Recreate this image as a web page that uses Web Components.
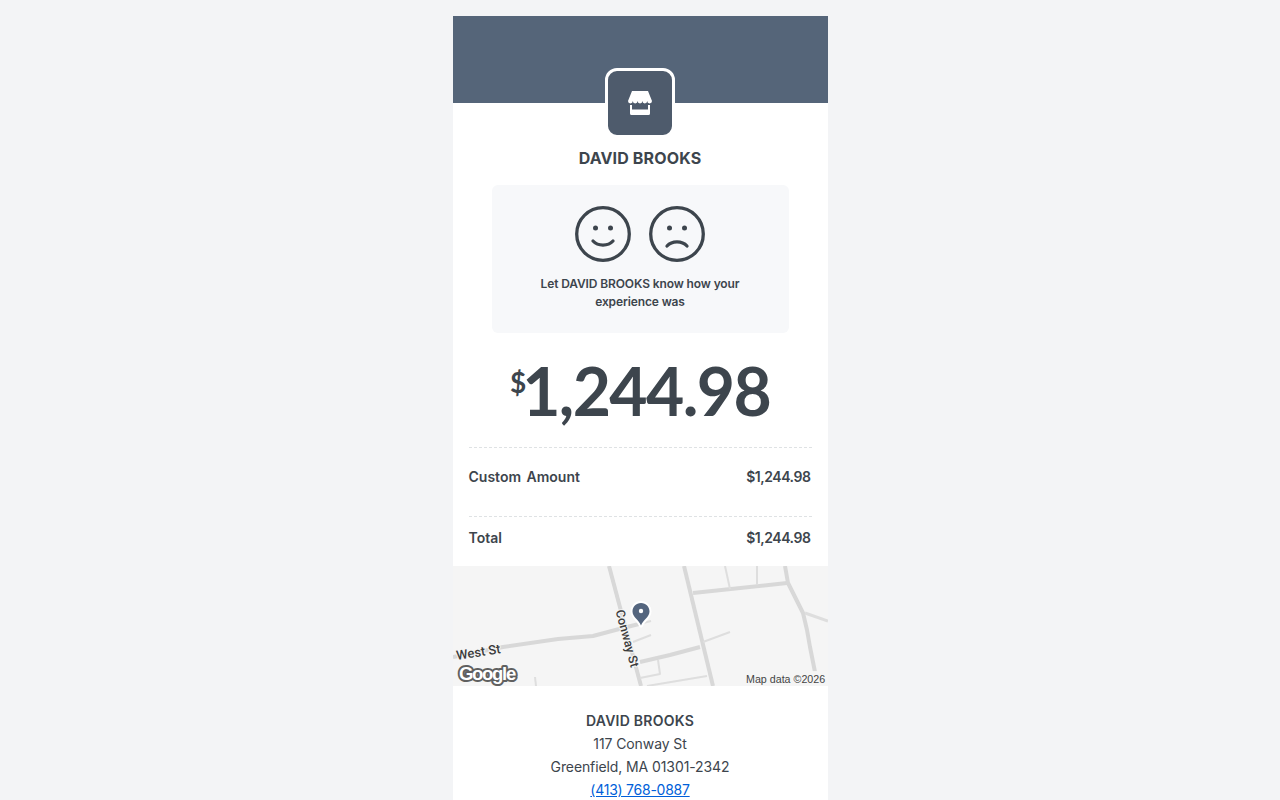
<!DOCTYPE html>
<html>
<head>
<meta charset="utf-8">
<title>Receipt</title>
<style>
  html { overflow: hidden; }
  body { margin: 0; background: #f3f4f6; font-family: Inter, "Liberation Sans", sans-serif; color: #3d454d; }
</style>
</head>
<body>
<receipt-card>
  <merchant-header name="DAVID BROOKS"></merchant-header>
  <feedback-box name="DAVID BROOKS"></feedback-box>
  <amount-total value="1,244.98"></amount-total>
  <line-item label="Custom Amount" value="$1,244.98" height="68" pad="20"></line-item>
  <line-item label="Total" value="$1,244.98" height="49" pad="12"></line-item>
  <map-panel></map-panel>
  <merchant-footer>
    <b>DAVID BROOKS</b>
    <span>117 Conway St</span>
    <span>Greenfield, MA 01301-2342</span>
    <a href="tel:4137680887">(413) 768-0887</a>
  </merchant-footer>
</receipt-card>

<script>
class ReceiptCard extends HTMLElement {
  constructor() {
    super()
    this.attachShadow({ mode: 'open' });
    this.shadowRoot.innerHTML = `
      <style>
      :host { display: block; padding-top: 16px; }
      div { width: 375px; margin: 0 auto; background: #fff; }
      </style>
      <div><slot></slot></div>`
  }
}
customElements.define('receipt-card', ReceiptCard);

class MerchantHeader extends HTMLElement {
  constructor() {
    super()
    this.attachShadow({ mode: 'open' });
    this.shadowRoot.innerHTML = `
      <style>
      :host { display: block; }
      .banner { height: 87px; background: #556579; display: flex; justify-content: center; }
      .logo {
          box-sizing: border-box; width: 70px; height: 70px; margin-top: 52px; border: 3px solid #fff;
          border-radius: 12px; background: #4e5b6c; display: flex; align-items: center; justify-content: center;
          position: relative;
      }
      h1 { margin: 45px 0 0; text-align: center; font-size: 16px; line-height: 20px; font-weight: 700; letter-spacing: 0.15px; color: #3d454d; }
      </style>
      <div class="banner">
        <div class="logo">
          <svg width="24" height="24" viewBox="0 0 24 24">
            <path fill="#fff" d="M4 0H20L24 10a2.400 2.400 0 0 1-4.800 0a2.400 2.400 0 0 1-4.800 0a2.400 2.400 0 0 1-4.800 0a2.400 2.400 0 0 1-4.800 0a2.400 2.400 0 0 1-4.800 0z"/>
            <path fill="#fff" d="M2 14V22.500A1.500 1.500 0 0 0 3.500 24H20.500A1.500 1.500 0 0 0 22 22.500V14H20V18.500H4V14z"/>
          </svg>
        </div>
      </div>
      <h1></h1>`
    this.shadowRoot.querySelector('h1').textContent = this.getAttribute('name');
  }
}
customElements.define('merchant-header', MerchantHeader);

class FeedbackBox extends HTMLElement {
  constructor() {
    super()
    this.attachShadow({ mode: 'open' });
    this.shadowRoot.innerHTML = `
      <style>
      :host { display: block; box-sizing: border-box; width: 297px; height: 148px; margin: 17px auto 0; padding-top: 21px; background: #f7f8fa; border-radius: 6px; }
      .faces { display: flex; justify-content: center; gap: 18px; }
      svg { display: block; }
      p { margin: 13px auto 0; width: 220px; text-align: center; font-size: 12px; line-height: 18px; font-weight: 600; letter-spacing: -0.12px; color: #3d454d; }
      </style>
      <div class="faces">
        <svg width="56" height="56" viewBox="0 0 56 56" fill="none" stroke="#3d454d" stroke-width="3.300">
          <circle cx="28" cy="28" r="26.300"/>
          <circle cx="20.500" cy="22" r="2.500" fill="#3d454d" stroke="none"/>
          <circle cx="35.500" cy="22" r="2.500" fill="#3d454d" stroke="none"/>
          <path d="M18 35c5 5.500 15 5.500 20 0" stroke-linecap="round"/>
        </svg>
        <svg width="56" height="56" viewBox="0 0 56 56" fill="none" stroke="#3d454d" stroke-width="3.300">
          <circle cx="28" cy="28" r="26.300"/>
          <circle cx="20.500" cy="22" r="2.500" fill="#3d454d" stroke="none"/>
          <circle cx="35.500" cy="22" r="2.500" fill="#3d454d" stroke="none"/>
          <path d="M18 40c5-5.500 15-5.500 20 0" stroke-linecap="round"/>
        </svg>
      </div>
      <p></p>`
    this.shadowRoot.querySelector('p').textContent = 'Let ' + this.getAttribute('name') + ' know how your experience was';
  }
}
customElements.define('feedback-box', FeedbackBox);

class AmountTotal extends HTMLElement {
  constructor() {
    super()
    this.attachShadow({ mode: 'open' });
    this.shadowRoot.innerHTML = `
      <style>
      :host { display: flex; justify-content: center; align-items: flex-start; height: 114px; color: #3d454d; font-family: Lato, "Liberation Sans", sans-serif; font-weight: 700; }
      .cur { font-size: 28px; line-height: 32px; margin-top: 33px; letter-spacing: -4px; }
      .val { font-size: 66px; line-height: 80px; margin-top: 18px; letter-spacing: -1.6px; }
      </style>
      <span class="cur">$</span><span class="val"></span>`
    this.shadowRoot.querySelector('.val').textContent = this.getAttribute('value');
  }
}
customElements.define('amount-total', AmountTotal);

class LineItem extends HTMLElement {
  constructor() {
    super()
    this.attachShadow({ mode: 'open' });
    this.shadowRoot.innerHTML = `
      <style>
      :host { display: block; margin: 0 16px; border-top: 1px dashed #dfe2e4; }
      div { display: flex; justify-content: space-between; padding-right: 1px; font-size: 14px; line-height: 18px; font-weight: 600; color: #3d454d; box-sizing: border-box; }
      .l { word-spacing: 2px; }
      .v { letter-spacing: -0.45px; }
      </style>
      <div><span class="l"></span><span class="v"></span></div>`
    const row = this.shadowRoot.querySelector('div');
    row.style.height = this.getAttribute('height') + 'px';
    row.style.paddingTop = this.getAttribute('pad') + 'px';
    this.shadowRoot.querySelector('.l').textContent = this.getAttribute('label');
    this.shadowRoot.querySelector('.v').textContent = this.getAttribute('value');
  }
}
customElements.define('line-item', LineItem);

class MapPanel extends HTMLElement {
  constructor() {
    super()
    this.attachShadow({ mode: 'open' });
    this.shadowRoot.innerHTML = `
      <style>
      :host { display: block; height: 120px; background: #f5f5f5; }
      svg { display: block; }
      text { font-family: Roboto, "Liberation Sans", sans-serif; }
      </style>
      <svg width="375" height="120" viewBox="0 0 375 120" fill="none" stroke-linejoin="round">
        <g stroke="#d8d8d8" stroke-width="4">
          <path d="M156 0L188 120"/>
          <path d="M231 0L260 120"/>
          <path d="M0 91L50 81L105 73L140 70L170 62L186 58"/>
          <path d="M240 27L334 17"/>
          <path d="M332 0L335 17L350 47L354 64L357 81L362 106"/>
          <path d="M187 96L217 89L247 81"/>
        </g>
        <g stroke="#dedede" stroke-width="2">
          <path d="M272 0L277 23"/>
          <path d="M304 0V19"/>
          <path d="M352 47L375 55" stroke-width="3"/>
          <path d="M250 76L277 66"/>
          <path d="M180 76L198 69"/>
          <path d="M205 94L207 108L187 112"/>
          <path d="M194 120L254 110"/>
          <path d="M82 111L83 120"/>
          <path d="M186 58L198 55"/>
        </g>
        <g paint-order="stroke" stroke="#f5f5f5" stroke-width="2" fill="#3c3c3c" font-weight="500">
          <text transform="translate(4 94) rotate(-9)" font-size="13">West St</text>
          <text transform="translate(162.500 45) rotate(75)" font-size="12.500">Conway St</text>
        </g>
        <path d="M188 37C183 37 179.500 41 179.500 45.500C179.500 51 186 54 188 59.500C190 54 196.500 51 196.500 45.500C196.500 41 193 37 188 37Z" fill="#54657e" stroke="#fff" stroke-width="4" paint-order="stroke"/>
        <circle cx="188" cy="45" r="2.200" fill="#fff"/>
        <text x="6" y="114" font-size="18.500" font-weight="700" fill="#fff" stroke="#606060" stroke-width="4" paint-order="stroke" letter-spacing="-1.300" style='font-family:"Liberation Sans"'>Google</text>
        <rect x="290" y="105" width="85" height="15" fill="#f5f5f5" opacity=".9"/>
        <text x="293" y="117" font-size="10.700" fill="#444" style='font-family:"Liberation Sans"'>Map data ©2026</text>
      </svg>`
  }
}
customElements.define('map-panel', MapPanel);

class MerchantFooter extends HTMLElement {
  constructor() {
    super()
    this.attachShadow({ mode: 'open' });
    this.shadowRoot.innerHTML = `
      <style>
      :host { display: flex; flex-direction: column; align-items: center; padding: 23px 0 16px; font-size: 14px; line-height: 23px; letter-spacing: -0.1px; color: #3d454d; }
      ::slotted(b) { font-weight: 600; letter-spacing: 0.25px; }
      ::slotted(a) { color: #005fd9; letter-spacing: -0.25px; }
      </style>
      <slot></slot>`
  }
}
customElements.define('merchant-footer', MerchantFooter);
</script>
</body>
</html>
